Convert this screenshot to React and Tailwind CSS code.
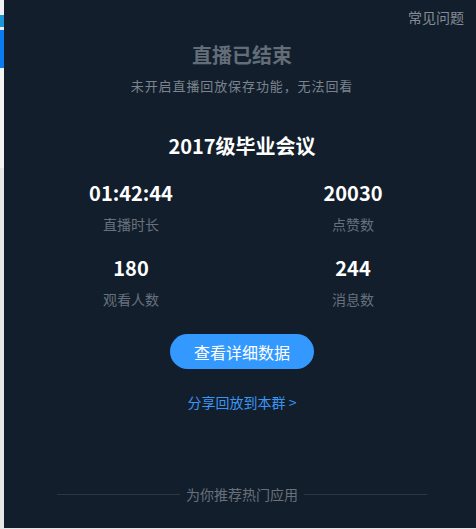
export default function App() {
  const font = { fontFamily: '"Noto Sans CJK SC", "Noto Sans", sans-serif' };
  return (
    <div className="w-[476px] h-[529px] flex flex-col bg-[#e4e6e9] overflow-hidden" style={font}>
      <div className="flex h-[528px]">
        <div className="w-[4px] flex flex-col bg-[#f1f1f1]">
          <div className="h-[15px]" />
          <div className="h-[12px] bg-[#1a95d6]" />
          <div className="h-[3px] bg-[#e9eef3]" />
          <div className="h-[38px] bg-[#0b7cf0]" />
          <div className="h-[100px] bg-[#f3f3f3]" />
          <div className="flex-1 bg-[#e7e7e7]" />
        </div>
        <div className="flex-1 bg-[#121e2c] flex flex-col">
          <div className="flex justify-end pt-[7px] pr-[12px]">
            <span className="text-[14px] leading-[20px] text-[#858c95]">常见问题</span>
          </div>
          <div className="flex flex-col items-center pl-[4px]">
            <div className="mt-[14px] text-[20px] leading-[28px] font-bold text-[#636d78]">直播已结束</div>
            <div className="mt-[8px] text-[13px] leading-[18px] tracking-[0.9px] text-[#7b848e]">未开启直播回放保存功能，无法回看</div>
            <div className="mt-[37px] text-[20px] leading-[28px] font-bold text-white">2017级毕业会议</div>
            <div className="w-[444px] grid grid-cols-2">
              {[
                ["01:42:44", "直播时长"],
                ["20030", "点赞数"],
                ["180", "观看人数"],
                ["244", "消息数"],
              ].map(([n, l], i) => (
                <div key={i} className={`flex flex-col items-center ${i < 2 ? "mt-[19px]" : "mt-[20px]"}`}>
                  <div className="text-[20px] leading-[28px] font-bold text-white">{n}</div>
                  <div className="mt-[7px] text-[14px] leading-[20px] text-[#67717c]">{l}</div>
                </div>
              ))}
            </div>
            <button className="mt-[25px] w-[144px] h-[35px] rounded-full bg-[#3399fe] text-white text-[16px] leading-[22px] flex items-center justify-center">
              查看详细数据
            </button>
            <div className="mt-[23px] text-[14px] leading-[20px] text-[#3a96f3]">分享回放到本群 &gt;</div>
          </div>
          <div className="mt-auto mb-[24px] pl-[4px] flex justify-center">
            <div className="w-[370px] flex items-center gap-[6px]">
              <div className="flex-1 h-px bg-[#2c3744]" />
              <span className="text-[14px] leading-[20px] text-[#68717b]">为你推荐热门应用</span>
              <div className="flex-1 h-px bg-[#2c3744]" />
            </div>
          </div>
        </div>
      </div>
    </div>
  );
}
